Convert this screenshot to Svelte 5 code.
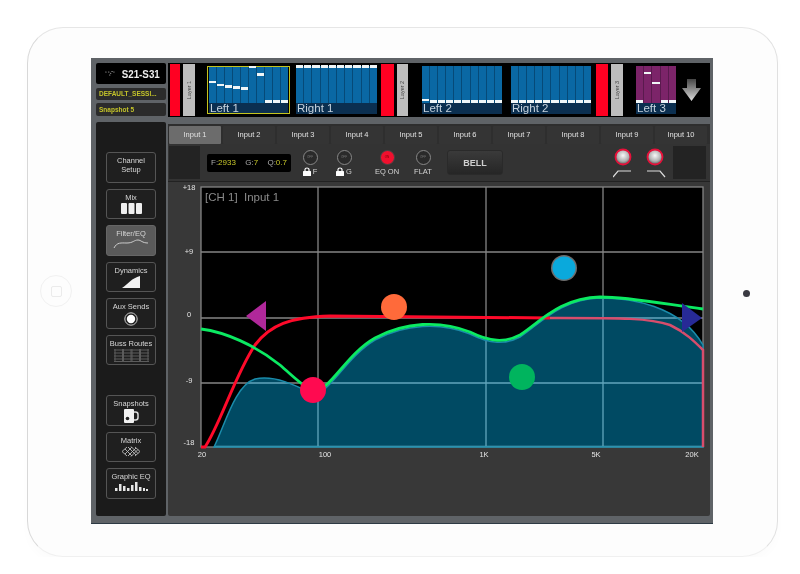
<script>
  const low = 0.97
  const strip = [
    { kind: 'red', w: 10, mr: 3 }, { kind: 'layer', label: 'Layer 1', w: 12, mr: 12 },
    { kind: 'bank', label: 'Left 1', w: 83, mr: 6, selected: true, levels: [0.42, 0.51, 0.55, 0.58, 0.61, 0, 0.21, low, low, low] },
    { kind: 'bank', label: 'Right 1', w: 81, mr: 4, levels: Array(10).fill(0.02) },
    { kind: 'red', w: 13, mr: 3 }, { kind: 'layer', label: 'Layer 2', w: 11, mr: 14 },
    { kind: 'bank', label: 'Left 2', w: 80, mr: 9, levels: [0.93, low, low, low, low, low, low, low, low, low] },
    { kind: 'bank', label: 'Right 2', w: 80, mr: 5, levels: Array(10).fill(low) },
    { kind: 'red', w: 12, mr: 3 }, { kind: 'layer', label: 'Layer 3', w: 12, mr: 13 },
    { kind: 'bank', label: 'Left 3', w: 40, mr: 6, purple: true, levels: [low, 0.2, 0.47, low, low] }
  ]
  const tabs = Array.from({ length: 10 }, (_, i) => 'Input ' + (i + 1))

  const green = 'M201 329C225 332 255 345 280 365C295 378 305 388 313 391C330 392 345 355 375 338C405 322 440 320 470 332C490 342 505 343 520 335C540 322 560 298 600 297C630 297 670 305 703 309'
  // rouge vif à gauche, rosé là où la courbe passe sur la zone bleue
  const redLeft = 'M201 447L205 447C220 425 235 375 255 345C270 325 290 317 330 316L550 318'
  const redRight = 'M550 318L560 318C620 318 650 318 670 325C685 332 695 342 703 350L703 447'
  const area = 'M214 447C225 425 235 385 255 379C275 375 295 385 313 394C330 394 345 358 375 340C405 324 440 322 470 334C490 344 505 345 520 337C540 324 560 299 600 298C630 298 680 305 703 345L703 447Z'
  const gridX = [318, 486, 603]
  const gridY = [252, 318, 383]
  const yLabels = [['+18', 190], ['+9', 254], ['0', 317], ['-9', 383], ['-18', 445]]
  const xLabels = [['20', 202], ['100', 325], ['1K', 484], ['5K', 596], ['20K', 692]]
</script>

<div class="tablet">
  <div class="home"></div>
  <div class="camera"></div>
  <div class="screen">
    <div class="side">
      <div class="scene">
        <svg width="16" height="9" viewBox="0 0 16 9"><g fill="#ddd"><circle cx="1.500" cy="2" r="0.800" /><circle cx="6" cy="2" r="0.800" /><circle cx="11" cy="1.500" r="0.800" /><circle cx="14" cy="2" r="0.800" /><circle cx="9" cy="4" r="0.800" /><circle cx="7.500" cy="7" r="0.800" /></g></svg>
        <b>S21-S31</b>
      </div>
      <div class="info one">DEFAULT_SESSI...</div>
      <div class="info">Snapshot 5</div>
      <nav class="rail">
        <button>Channel<br />Setup</button>
        <button>Mix
          <svg width="21" height="11" viewBox="0 0 21 11"><g fill="#eee"><rect width="6" height="11" rx="1" /><rect x="7.500" width="6" height="11" rx="1" /><rect x="15" width="6" height="11" rx="1" /></g></svg>
        </button>
        <button class="on">Filter/EQ
          <svg width="36" height="10" viewBox="0 0 36 10"><path d="M1 9C4 3 8 4 14 4C20 4 21 1 25 1C28 1 29 4 35 4" fill="none" stroke="#ccc" /></svg>
        </button>
        <button>Dynamics
          <svg width="18" height="12" viewBox="0 0 18 12"><path d="M0 12C6 8 10 2 18 0V12Z" fill="#f2f2f2" /></svg>
        </button>
        <button>Aux Sends
          <svg width="14" height="14" viewBox="0 0 14 14"><circle cx="7" cy="7" r="6.200" fill="none" stroke="#ccc" /><circle cx="7" cy="7" r="4.200" fill="#fff" /></svg>
        </button>
        <button>Buss Routes
          <svg width="35" height="13" viewBox="0 0 35 13"><g stroke="#5c5c5c" fill="none"><path d="M0 1H35M0 4H35M0 7H35M0 10H35M0 12.500H35" /><path d="M1 0V13M8.500 0V13M9.500 0V13M17 0V13M18 0V13M25.500 0V13M26.500 0V13M34 0V13" /></g></svg>
        </button>
        <div class="rail-gap"></div>
        <button>Snapshots
          <svg width="16" height="14" viewBox="0 0 16 14"><rect x="9" y="3" width="6" height="8" rx="2.500" fill="none" stroke="#ddd" stroke-width="1.500" /><rect x="1" width="10" height="14" rx="1" fill="#f2f2f2" /><circle cx="4.500" cy="9.500" r="1.800" fill="#222" /></svg>
        </button>
        <button>Matrix
          <svg width="18" height="11" viewBox="0 0 18 11"><path d="M0 5.500L5 10M3 3L10 10M6 1L14 9M9 0.500L16 7.500M13 1L18 5.500M0 5.500L5 1M3 8L10 1M6 10L14 2M9 10.500L16 3.500M13 10L18 5.500" fill="none" stroke="#bbb" stroke-width="0.900" /></svg>
        </button>
        <button>Graphic EQ
          <svg width="33" height="9" viewBox="0 0 33 9"><g fill="#e6e6e6"><rect y="6" width="2.500" height="3" /><rect x="4" y="2" width="2.500" height="7" /><rect x="8" y="4" width="2.500" height="5" /><rect x="12" y="6" width="2.500" height="3" /><rect x="16" y="3" width="2.500" height="6" /><rect x="20" y="0" width="2.500" height="9" /><rect x="24" y="5" width="2.500" height="4" /><rect x="28" y="6" width="2" height="3" /><rect x="31" y="7" width="2" height="2" /></g></svg>
        </button>
      </nav>
    </div>

    <div class="content">
      <div class="strip">
        {#each strip as s}
          {#if s.kind === 'red'}
            <div class="redbar" style="width: {s.w}px; margin-right: {s.mr}px"></div>
          {:else if s.kind === 'layer'}
            <div class="layer" style="width: {s.w}px; margin-right: {s.mr}px"><span>{s.label}</span></div>
          {:else}
            <div class="bank" class:selected={s.selected} class:purple={s.purple} style="width: {s.w}px; margin-right: {s.mr}px">
              <div class="faders">
                {#each s.levels as l}
                  <div class="fader"><i style="top: {l * 100}%"></i></div>
                {/each}
              </div>
              <div class="bank-name">{s.label}</div>
            </div>
          {/if}
        {/each}
        <svg class="arrow" width="19" height="22" viewBox="0 0 19 22"><defs><linearGradient id="ar" x1="0" y1="0" x2="0" y2="1"><stop offset="0" stop-color="#444" /><stop offset="1" stop-color="#ddd" /></linearGradient></defs><path d="M5 0H14V9H19L9.500 22L0 9H5Z" fill="url(#ar)" /></svg>
      </div>

      <section class="main">
        <div class="tabs">
          {#each tabs as t, i}
            <div class="tab" class:active={i === 0}>{t}</div>
          {/each}
        </div>

        <div class="tools">
          <div class="square"></div>
          <div class="readout"><span>F:<em>2933</em></span><span>G:<em>7</em></span><span>Q:<em>0.7</em></span></div>
          <div class="toggle first"><span class="led">OFF</span><label>{@render lock()}F</label></div>
          <div class="toggle"><span class="led">OFF</span><label>{@render lock()}G</label></div>
          <div class="toggle gap"><span class="led lit">ON</span><label>EQ ON</label></div>
          <div class="toggle"><span class="led">OFF</span><label>FLAT</label></div>
          <button class="bell">BELL</button>
          <div class="knobs">
            <svg width="54" height="34" viewBox="0 0 54 34">
              <defs><radialGradient id="kn" cx="0.500" cy="0.400" r="0.550"><stop offset="0" stop-color="#f8f8f8" /><stop offset="0.700" stop-color="#b0b0b0" /><stop offset="1" stop-color="#6a6a6a" /></radialGradient></defs>
              <circle cx="10" cy="11" r="7.500" fill="url(#kn)" stroke="#e8103a" stroke-width="1.800" />
              <circle cx="42" cy="11" r="7.500" fill="url(#kn)" stroke="#e8103a" stroke-width="1.800" />
              <path d="M0 31L5 25H18M34 25H47L52 31" fill="none" stroke="#ddd" stroke-width="1.200" />
            </svg>
          </div>
          <div class="square end"></div>
        </div>

        <svg class="chart" viewBox="168 182 542 335" width="542" height="335">
          <rect x="201" y="187" width="502" height="260" fill="#000" />
          <g stroke="#858585" stroke-width="1.300">
            {#each gridX as x}<path d="M{x} 187V447" />{/each}
            {#each gridY as y}<path d="M201 {y}H703" />{/each}
            <rect x="201" y="187" width="502" height="260" fill="none" />
          </g>
          <path d={area} fill="#004a63" />
          <clipPath id="under"><path d={area} /></clipPath>
          <g clip-path="url(#under)">
            <g stroke="#62a6bd" stroke-width="1.300">
              {#each gridX as x}<path d="M{x} 187V447" />{/each}
              {#each gridY as y}<path d="M201 {y}H703" />{/each}
              <path d="M201 446.500H703" />
            </g>
          </g>
          <path d={area} fill="none" stroke="#1a8cab" stroke-width="1.500" />
          <path d={redRight} fill="none" stroke="#d84d6c" stroke-width="2.500" />
          <path d={redLeft} fill="none" stroke="#ff0a2a" stroke-width="3" />
          <path d={green} fill="none" stroke="#0bea62" stroke-width="2.800" />

          <text class="ch" x="205" y="201">[CH 1]&nbsp; Input 1</text>
          {#each yLabels as [t, y]}<text class="tick" x="189" y={y} text-anchor="middle">{t}</text>{/each}
          {#each xLabels as [t, x]}<text class="tick" x={x} y="457" text-anchor="middle">{t}</text>{/each}

          <circle cx="564" cy="268" r="13" fill="#8a8a8a" opacity="0.800" />
          <circle cx="564" cy="268" r="11.500" fill="#0aa9dc" />
          <circle cx="394" cy="307" r="13" fill="#ff6a3a" />
          <circle cx="522" cy="377" r="13" fill="#00b45e" />
          <circle cx="313" cy="390" r="13" fill="#ff0a50" />
          <path d="M246 316L266 301V331Z" fill="#b0289a" />
          <path d="M702 318L682 303V332Z" fill="#272a96" />
        </svg>
      </section>
    </div>
  </div>
</div>

{#snippet lock()}
  <svg width="8" height="9" viewBox="0 0 8 9"><path d="M2 4V2.500C2 0.500 6 0.500 6 2.500V4" fill="none" stroke="#fff" stroke-width="1.200" /><rect y="4" width="8" height="5" rx="0.500" fill="#fff" /></svg>
{/snippet}

<style>
  :global(body) { background: #fff; font-family: "Liberation Sans", Arial, sans-serif; }

  .tablet { position: relative; box-sizing: border-box; width: 751px; height: 530px; margin: 27px 0 0 27px; padding: 30px 63px; background: #fdfdfd; border: 1px solid #f0f0f0; border-top-color: #e6e6e6; border-left-color: #d8d8d8; border-right-color: #e0e0e0; border-radius: 36px; box-shadow: 0 6px 10px rgba(0, 0, 0, 0.015); }
  .home { position: absolute; left: 12px; top: 247px; width: 30px; height: 30px; border: 1px solid #f1f1f1; border-radius: 50%; }
  .home::after { content: ''; position: absolute; left: 10px; top: 10px; width: 9px; height: 9px; border: 1px solid #ebebeb; border-radius: 2px; }
  .camera { position: absolute; left: 715px; top: 262px; width: 7px; height: 7px; background: #3a3a42; border-radius: 50%; }

  .screen { display: flex; gap: 2px; box-sizing: border-box; width: 622px; height: 466px; padding: 5px 3px 7px 5px; background: #5f6367; border-bottom: 1px solid #2d3a44; filter: blur(0.35px); }
  .side { display: flex; flex-direction: column; width: 70px; }
  .scene { display: flex; align-items: center; justify-content: space-between; height: 21px; padding: 0 6px 0 9px; background: #000; border-radius: 2px; color: #eee; }
  .scene b { font-size: 11.500px; transform: scaleX(0.85); transform-origin: right; white-space: nowrap; }
  .info { height: 13px; margin-top: 3px; padding-left: 3px; background: #2b2b2b; border-radius: 2px; color: #c4c42a; font-size: 6.500px; font-weight: bold; line-height: 13px; white-space: nowrap; }
  .info.one { height: 12px; margin-top: 4px; line-height: 12px; }
  .rail { flex: 1; display: flex; flex-direction: column; align-items: center; gap: 6px; margin-top: 6px; padding-top: 30px; background: #1b1b1b; border-radius: 2px; }
  .rail button { display: flex; flex-direction: column; align-items: center; gap: 1px; box-sizing: border-box; width: 50px; height: 30.500px; padding: 3px 0 0; background: #1f1f1f; border: 1.500px solid #555; border-radius: 3px; color: #d6d6d6; font: 7.500px/9px "Liberation Sans", Arial, sans-serif; white-space: nowrap; }
  .rail button.on { background: #5a5a5a; border-color: #666; }
  .rail-gap { height: 18px; }

  .content { flex: 1; display: flex; flex-direction: column; min-width: 0; }
  .strip { display: flex; align-items: stretch; box-sizing: border-box; height: 54px; padding: 1px 0 1px 2px; background: #000; }
  .redbar { flex: none; background: #ff0022; }
  .layer { flex: none; display: flex; align-items: center; justify-content: center; background: #bdbdbd; }
  .layer span { transform: rotate(-90deg); color: #444; font-size: 5.500px; white-space: nowrap; }
  .bank { flex: none; box-sizing: border-box; margin-top: 2px; margin-bottom: 2px; display: flex; flex-direction: column; }
  .bank.selected { padding: 0 1px; border: 1.500px solid #c4c41e; }
  .faders { display: flex; gap: 1px; flex: 1; background: #064a78; }
  .fader { position: relative; flex: 1; background: #0a68a4; }
  .fader i { position: absolute; left: 0; right: 0; height: 2.500px; margin-top: -1.500px; background: #f0f6f8; }
  .purple .faders { background: #5a1a4e; }
  .purple .fader { background: #7c2469; }
  .bank-name { flex: none; height: 11px; padding-left: 1px; background: #0b2f50; color: #c7d3de; font-size: 11.500px; line-height: 11px; white-space: nowrap; }
  .selected .bank-name { height: 10px; line-height: 10px; }
  .arrow { align-self: center; }

  .main { flex: 1; display: flex; flex-direction: column; margin-top: 7px; background: #383838; border-radius: 2px; min-height: 0; }
  .tabs { display: flex; gap: 2px; height: 20px; padding: 2px 3px 0 1px; box-sizing: border-box; background: #2e2e2e; }
  .tab { flex: 1; background: #343434; color: #e0e0e0; font-size: 7.500px; line-height: 18px; text-align: center; border-radius: 1px; }
  .tab.active { background: #6c6c6c; }
  .tools { display: flex; align-items: center; box-sizing: border-box; height: 38px; padding: 2px 4px 2px 1px; background: #333; border-bottom: 1px solid #222; }
  .square { align-self: stretch; width: 31px; background: #232323; }
  .square.end { width: 33px; margin-left: 1px; }
  .readout { display: flex; justify-content: space-between; align-items: center; box-sizing: border-box; width: 84px; height: 18px; margin-left: 7px; padding: 0 4px; background: #000; border-radius: 2px; color: #aaa; font-size: 8px; }
  .readout em { color: #c6c62a; font-style: normal; }
  .toggle { display: flex; flex-direction: column; align-items: center; gap: 2px; width: 34px; }
  .toggle.first { margin-left: 2px; }
  .toggle.gap { margin: 0 2px 0 9px; }
  .toggle label { display: flex; align-items: center; gap: 2px; color: #d4d4d4; font-size: 7.500px; line-height: 9px; white-space: nowrap; }
  .led { display: flex; align-items: center; justify-content: center; box-sizing: border-box; width: 15px; height: 15px; border: 1.500px solid #888; border-radius: 50%; background: #2a2a2a; color: #777; font-size: 3px; }
  .led.lit { background: #f0102e; border-color: #444; color: #700; }
  .bell { width: 56px; height: 25px; margin-left: 7px; padding: 0; background: linear-gradient(#3a3a3a, #262626); border: 1px solid #2a2a2a; border-radius: 3px; color: #d0d0d0; font: bold 9px "Liberation Sans", Arial, sans-serif; }
  .knobs { display: flex; margin-left: auto; margin-right: 5px; }
  .chart { display: block; flex: none; }
  .ch { fill: #8a8a8a; font-size: 11.500px; }
  .tick { fill: #e4e4e4; font-size: 7.500px; }
</style>
